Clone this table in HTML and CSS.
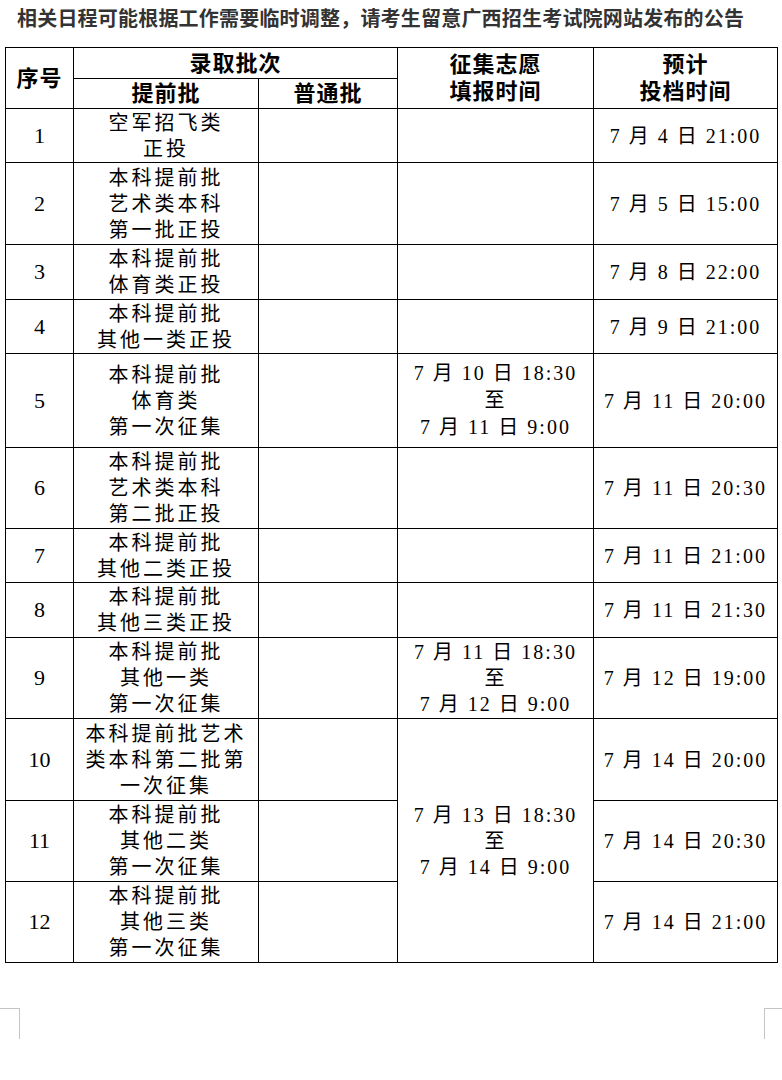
FILE: index.html
```html
<!DOCTYPE html>
<html lang="zh-CN">
<head>
<meta charset="utf-8">
<title>日程</title>
<link rel="stylesheet" href="styles.css">
</head>
<body>
<div class="page">
  <h1 class="title">相关日程可能根据工作需要临时调整，请考生留意广西招生考试院网站发布的公告</h1>
  <table class="sched">
    <colgroup>
      <col class="c-no"><col class="c-early"><col class="c-normal"><col class="c-fill"><col class="c-cast">
    </colgroup>
    <thead>
      <tr class="hr1">
        <th rowspan="2" class="hd">序号</th>
        <th colspan="2" class="hd">录取批次</th>
        <th rowspan="2" class="hd">征集志愿<br>填报时间</th>
        <th rowspan="2" class="hd">预计<br>投档时间</th>
      </tr>
      <tr class="hr2">
        <th class="hd">提前批</th>
        <th class="hd">普通批</th>
      </tr>
    </thead>
    <tbody>
      <tr class="r54"><td class="no">1</td><td class="cn">空军招飞类<br>正投</td><td></td><td></td><td class="dt">7 月 4 日 21:00</td></tr>
      <tr class="r82"><td class="no">2</td><td class="cn">本科提前批<br>艺术类本科<br>第一批正投</td><td></td><td></td><td class="dt">7 月 5 日 15:00</td></tr>
      <tr class="r55"><td class="no">3</td><td class="cn">本科提前批<br>体育类正投</td><td></td><td></td><td class="dt">7 月 8 日 22:00</td></tr>
      <tr class="r54"><td class="no">4</td><td class="cn">本科提前批<br>其他一类正投</td><td></td><td></td><td class="dt">7 月 9 日 21:00</td></tr>
      <tr class="r94"><td class="no">5</td><td class="cn">本科提前批<br>体育类<br>第一次征集</td><td></td><td class="dt dt3">7 月 10 日 18:30<br>至<br>7 月 11 日 9:00</td><td class="dt">7 月 11 日 20:00</td></tr>
      <tr class="r81"><td class="no">6</td><td class="cn">本科提前批<br>艺术类本科<br>第二批正投</td><td></td><td></td><td class="dt">7 月 11 日 20:30</td></tr>
      <tr class="r54"><td class="no">7</td><td class="cn">本科提前批<br>其他二类正投</td><td></td><td></td><td class="dt">7 月 11 日 21:00</td></tr>
      <tr class="r55"><td class="no">8</td><td class="cn">本科提前批<br>其他三类正投</td><td></td><td></td><td class="dt">7 月 11 日 21:30</td></tr>
      <tr class="r81"><td class="no">9</td><td class="cn">本科提前批<br>其他一类<br>第一次征集</td><td></td><td class="dt">7 月 11 日 18:30<br>至<br>7 月 12 日 9:00</td><td class="dt">7 月 12 日 19:00</td></tr>
      <tr class="r82"><td class="no">10</td><td class="cn">本科提前批艺术<br>类本科第二批第<br>一次征集</td><td></td><td rowspan="3" class="dt">7 月 13 日 18:30<br>至<br>7 月 14 日 9:00</td><td class="dt">7 月 14 日 20:00</td></tr>
      <tr class="r81"><td class="no">11</td><td class="cn">本科提前批<br>其他二类<br>第一次征集</td><td></td><td class="dt">7 月 14 日 20:30</td></tr>
      <tr class="r81"><td class="no">12</td><td class="cn">本科提前批<br>其他三类<br>第一次征集</td><td></td><td class="dt">7 月 14 日 21:00</td></tr>
    </tbody>
  </table>
  <div class="marks">
    <span class="mark mark-l"></span>
    <span class="mark mark-r"></span>
  </div>
</div>
</body>
</html>
```
FILE: styles.css
```css
html, body {
  margin: 0;
  padding: 0;
  background: #ffffff;
}

.page {
  width: 782px;
  font-family: "Liberation Serif", "Noto Sans CJK SC", serif;
  color: #000;
}

.title {
  margin: 0;
  padding: 9px 0 0 17px;
  height: 38px;
  box-sizing: border-box;
  font-family: "Liberation Serif", "Noto Sans CJK SC", serif;
  font-size: 20px;
  line-height: 20px;
  font-weight: 700;
  color: #333;
  letter-spacing: 0.2px;
  white-space: nowrap;
}

.sched {
  margin: 9px 0 0 5px;
  width: 772px;
  border-collapse: collapse;
  table-layout: fixed;
}

.c-no { width: 68px; }
.c-early { width: 185px; }
.c-normal { width: 139px; }
.c-fill { width: 196px; }
.c-cast { width: 184px; }

.sched th,
.sched td {
  border: 1px solid #000;
  padding: 0;
  text-align: center;
  vertical-align: middle;
  white-space: nowrap;
}

.hd {
  font-family: "Liberation Serif", "Noto Sans CJK SC", serif;
  font-size: 22px;
  font-weight: 700;
  line-height: 27px;
  letter-spacing: 1px;
  padding-left: 1px;
}

.hr1 { height: 31px; }
.hr2 { height: 30px; }

.r54 { height: 54px; }
.r55 { height: 55px; }
.r81 { height: 81px; }
.r82 { height: 82px; }
.r94 { height: 94px; }

.no {
  font-family: "Liberation Serif", serif;
  font-size: 22px;
  line-height: 26px;
}

.cn {
  font-family: "Liberation Serif", "Noto Sans CJK SC", serif;
  font-size: 20px;
  font-weight: 400;
  line-height: 26px;
  letter-spacing: 3px;
  padding-left: 3px;
}

.dt {
  font-family: "Liberation Serif", "Noto Sans CJK SC", serif;
  font-size: 20px;
  line-height: 26px;
  letter-spacing: 2px;
  padding-left: 2px;
}

.dt3 {
  line-height: 27px;
}

.marks {
  display: flex;
  justify-content: space-between;
  margin-top: 45px;
}

.mark {
  display: block;
  height: 30px;
  border-top: 1px solid #c4c4c4;
}

.mark-l {
  width: 19px;
  border-right: 1px solid #c4c4c4;
}

.mark-r {
  width: 17px;
  border-left: 1px solid #c4c4c4;
}
```
